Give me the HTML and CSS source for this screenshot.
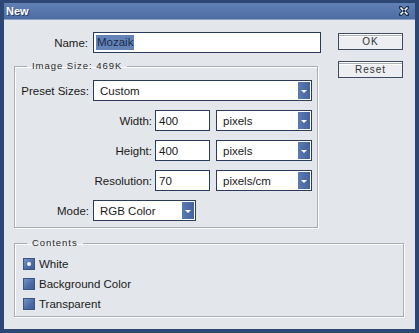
FILE: index.html
```html
<!DOCTYPE html>
<html lang="en">
<head>
    <meta charset="UTF-8">
    <meta name="viewport" content="width=device-width, initial-scale=1.0">
    <title>New</title>
    <link rel="stylesheet" href="styles.css">
</head>
<body>

    <div class="window">
        <div class="titlebar">
            <span class="title">New</span>
            <svg class="close" width="10" height="10" viewBox="0 0 10 10">
                <path d="M1.5 1.5 L8.5 8.5 M8.5 1.5 L1.5 8.5" stroke="#1c2b4a" stroke-width="3.4" stroke-linecap="square"/>
                <path d="M1.5 1.5 L8.5 8.5 M8.5 1.5 L1.5 8.5" stroke="#ffffff" stroke-width="1.6"/>
                <circle cx="5" cy="5" r="1.2" fill="#1c2b4a"/>
            </svg>
        </div>

        <div class="body">
            <div class="top">
                <div class="main">
                    <div class="row">
                        <label class="lbl name-lbl">Name:</label>
                        <div class="field name-field"><span class="sel">Mozaik</span></div>
                    </div>

                    <fieldset class="group size">
                        <legend>Image Size: 469K</legend>
                        <div class="rows">
                            <div class="row">
                                <label class="lbl">Preset Sizes:</label>
                                <div class="select preset"><span>Custom</span><i class="arrow"></i></div>
                            </div>
                            <div class="row">
                                <label class="lbl wide">Width:</label>
                                <div class="field num">400</div>
                                <div class="select unit"><span>pixels</span><i class="arrow"></i></div>
                            </div>
                            <div class="row">
                                <label class="lbl wide">Height:</label>
                                <div class="field num">400</div>
                                <div class="select unit"><span>pixels</span><i class="arrow"></i></div>
                            </div>
                            <div class="row">
                                <label class="lbl wide">Resolution:</label>
                                <div class="field num">70</div>
                                <div class="select unit"><span>pixels/cm</span><i class="arrow"></i></div>
                            </div>
                            <div class="row">
                                <label class="lbl">Mode:</label>
                                <div class="select mode"><span>RGB Color</span><i class="arrow"></i></div>
                            </div>
                        </div>
                    </fieldset>
                </div>

                <div class="actions">
                    <button class="button">OK</button>
                    <button class="button">Reset</button>
                </div>
            </div>

            <fieldset class="group contents">
                <legend>Contents</legend>
                <div class="radio checked"><i class="box"></i>White</div>
                <div class="radio"><i class="box"></i>Background Color</div>
                <div class="radio"><i class="box"></i>Transparent</div>
            </fieldset>
        </div>
    </div>

</body>
</html>
```

FILE: styles.css
```css
:root {
    --frame: #2d4673;
    --title-bg: linear-gradient(#6180b4, #4c6da4);
    --panel: #e3e6ea;
    --field-border: #2a3b5c;
    --blue: #4c6da5;
    --text: #1a1a1a;
}

body {
    margin: 0;
    font-family: 'Liberation Sans', Arial, sans-serif;
    font-size: 11.5px;
    color: var(--text);
}

.window {
    width: 419px;
    height: 333px;
    box-sizing: border-box;
    border: 4px solid var(--frame);
    border-top-width: 3px;
    background: var(--panel);
}

.titlebar {
    height: 16px;
    display: flex;
    align-items: center;
    justify-content: space-between;
    padding: 0 6px 0 2px;
    background: var(--title-bg);
    border-bottom: 1px solid #8ea3c6;
}

.title {
    color: #fff;
    font-weight: bold;
    font-size: 11px;
    text-shadow: 1px 1px 0 #2a3f66;
}

.body {
    padding: 12px 0 0 10px;
}

.top {
    display: flex;
}

.main {
    width: 307px;
}

.row {
    display: flex;
    align-items: center;
    height: 21px;
}

.lbl {
    width: 68px;
    margin-right: 4px;
    text-align: right;
    white-space: nowrap;
}

.name-lbl {
    width: 74px;
    margin-right: 5px;
}

.lbl.wide {
    width: 131px;
    margin-right: 3px;
}

.field,
.select {
    height: 21px;
    box-sizing: border-box;
    border: 1px solid var(--field-border);
    background: #fff;
    display: flex;
    align-items: center;
}

.name-field {
    width: 228px;
    padding-left: 2px;
}

.sel {
    background: #6383b8;
    color: #1b2a48;
    padding: 1px 1px 2px;
}

.num {
    width: 55px;
    padding-left: 3px;
}

.select {
    justify-content: space-between;
    padding: 1px 1px 1px 6px;
}

.preset { width: 219px; }
.unit { width: 96px; margin-left: 6px; }
.mode { width: 103px; }

.arrow {
    width: 12px;
    height: 17px;
    background: linear-gradient(90deg, #5a7bb2, #4462a0);
    position: relative;
}

.arrow::after {
    content: "";
    position: absolute;
    left: 3px;
    top: 8px;
    border-left: 3px solid transparent;
    border-right: 3px solid transparent;
    border-top: 3px solid #fff;
}

.group {
    margin: 0;
    min-width: 0;
    box-sizing: border-box;
    border: 1px solid #a8adb6;
    box-shadow: 1px 1px 0 #fff, inset 1px 1px 0 #fff;
}

.group legend {
    font-size: 9.5px;
    letter-spacing: 0.95px;
    color: #2a2a2a;
    line-height: 12px;
    padding: 0 5px;
}

.size {
    width: 304px;
    margin-top: 7px;
    padding: 0 5px 6px 6px;
}

.size legend {
    margin-left: 6px;
}

.rows {
    display: flex;
    flex-direction: column;
    gap: 9px;
    padding-top: 8px;
}

.actions {
    margin-left: 17px;
    padding-top: 1px;
    display: flex;
    flex-direction: column;
    gap: 11px;
}

.button {
    width: 65px;
    height: 17px;
    padding: 0;
    font-family: 'Liberation Sans', Arial, sans-serif;
    font-size: 10px;
    letter-spacing: 1px;
    color: #333;
    border: 1px solid #3e4a62;
    background: linear-gradient(#fff 0 1px, #a9aeb8 1px 2px, #ffffff 2px 3px, #eceef2 3px);
}

.contents {
    width: 390px;
    margin-top: 9px;
    padding: 5px 0 2px 8px;
}

.contents legend {
    margin-left: 4px;
}

.radio {
    height: 20px;
    display: flex;
    align-items: center;
    gap: 4px;
}

.box {
    width: 12px;
    height: 12px;
    box-sizing: border-box;
    border: 1px solid #3b5584;
    background: linear-gradient(135deg, #7595c8, #4a6aa2 60%, #3f5e96);
    position: relative;
}

.checked .box::after {
    content: "";
    position: absolute;
    left: 3px;
    top: 3px;
    width: 4px;
    height: 4px;
    border-radius: 50%;
    background: #fff;
}
```
